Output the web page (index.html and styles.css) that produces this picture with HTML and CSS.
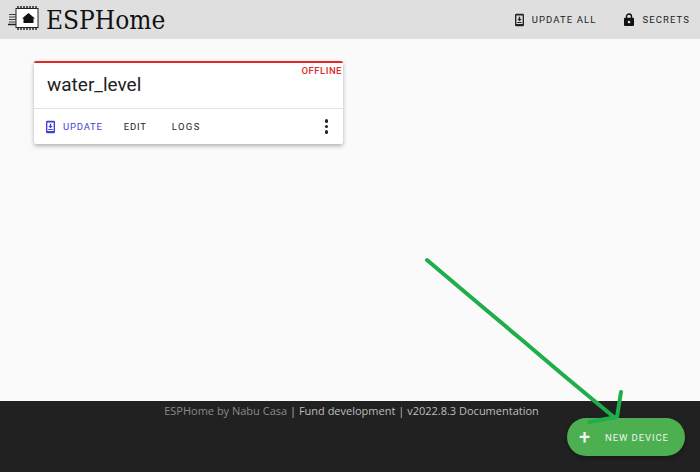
FILE: index.html
```html
<!DOCTYPE html>
<html lang="en">
<head>
  <meta charset="UTF-8" />
  <title>ESPHome</title>
  <link rel="stylesheet" href="styles.css">
</head>
<body>
  <header class="navbar">
    <div class="brand">
      <svg class="logo" width="31" height="24" viewBox="0 0 31 24">
        <path d="M1 8.500h7M1 11h7M1 13.500h7M1 16h7" stroke="#444" stroke-width="1" fill="none"/>
        <path d="M0 18.500h8" stroke="#222" stroke-width="1.500"/>
        <rect x="8" y="2.500" width="22" height="19" fill="#fff" stroke="#222" stroke-width="1"/>
        <path d="M9 1h20M9 23h20" stroke="#555" stroke-width="2" stroke-dasharray="2 1" fill="none"/>
        <path d="M20.500 7l6.500 5.500h-1.500v4.500h-10v-4.500h-1.500z" fill="#111"/>
      </svg>
      <span class="brand-name">ESPHome</span>
    </div>
    <nav class="nav-actions">
      <a class="nav-link">
        <svg width="9" height="14" viewBox="0 0 10 14">
          <path d="M1.500 0h7A1.500 1.500 0 0 1 10 1.500v11A1.500 1.500 0 0 1 8.500 14h-7A1.500 1.500 0 0 1 0 12.500v-11A1.500 1.500 0 0 1 1.500 0zM1.500 2v9.500h7V2z" fill="#222"/>
          <path d="M4.200 3.500h1.600v2.500h1.700L5 8.500 2.500 6h1.700zM2.500 9.200h5v1h-5z" fill="#222"/>
        </svg>
        UPDATE ALL
      </a>
      <a class="nav-link">
        <svg width="10" height="13" viewBox="0 0 10 13">
          <path d="M2.500 5V3.500a2.500 2.500 0 0 1 5 0V5" fill="none" stroke="#111" stroke-width="1.400"/>
          <path d="M1 4.800h8a1 1 0 0 1 1 1V12a1 1 0 0 1-1 1H1a1 1 0 0 1-1-1V5.800a1 1 0 0 1 1-1z" fill="#111"/>
          <circle cx="5" cy="9" r="1.300" fill="#ddd"/>
        </svg>
        SECRETS
      </a>
    </nav>
  </header>

  <main class="content">
    <div class="card">
      <span class="status">OFFLINE</span>
      <div class="card-title">water_level</div>
      <div class="card-actions">
        <a class="action action-update">
          <svg width="9" height="14" viewBox="0 0 10 14">
            <path d="M1.500 0h7A1.500 1.500 0 0 1 10 1.500v11A1.500 1.500 0 0 1 8.500 14h-7A1.500 1.500 0 0 1 0 12.500v-11A1.500 1.500 0 0 1 1.500 0zM1.500 2v9.500h7V2z" fill="#3f3fd0"/>
            <path d="M4.200 3.500h1.600v2.500h1.700L5 8.500 2.500 6h1.700zM2.500 9.200h5v1h-5z" fill="#3f3fd0"/>
          </svg>
          UPDATE
        </a>
        <a class="action">EDIT</a>
        <a class="action action-logs">LOGS</a>
        <span class="menu-dots"><i></i><i></i><i></i></span>
      </div>
    </div>
  </main>

  <footer class="footer">
    <span class="footer-dim">ESPHome by Nabu Casa</span> | <span class="footer-mid">Fund development</span> | <span class="footer-mid">v2022.8.3 Documentation</span>
  </footer>

  <button class="fab"><span class="fab-plus">+</span>NEW DEVICE</button>

  <!-- hand drawn arrow on top of the screenshot -->
  <svg class="arrow" width="700" height="472" viewBox="0 0 700 472">
    <path d="M427 260L453 282L485 309L522 340L562 374L615 418M621 392L617 417L589 422" fill="none" stroke="#1fae4b" stroke-width="4" stroke-linecap="round" stroke-linejoin="round"/>
  </svg>
</body>
</html>
```

FILE: styles.css
```css
* {
  box-sizing: border-box;
}

html, body {
  height: 100%;
}

body {
  margin: 0;
  height: 472px;
  overflow: hidden;
  position: relative;
  display: flex;
  flex-direction: column;
  background-color: #fafafa;
  font-family: Roboto, sans-serif;
}

.navbar {
  height: 39px;
  background-color: #dfdfdf;
  display: flex;
  align-items: center;
  justify-content: space-between;
  padding: 0 10px 0 8px;
}

.brand {
  display: flex;
  align-items: center;
  gap: 7px;
}

.logo {
  margin-top: -3px;
}

.brand-name {
  font-family: "DejaVu Serif Condensed", "DejaVu Serif", serif;
  font-size: 26px;
  color: #111;
  line-height: 36px;
}

.nav-actions {
  display: flex;
  gap: 28px;
}

.nav-link {
  display: flex;
  align-items: center;
  gap: 8px;
  font-size: 9.500px;
  letter-spacing: 1.100px;
  color: #222;
}

.content {
  flex: 1;
  padding: 22px 0 0 34px;
}

.card {
  position: relative;
  width: 309px;
  height: 83px;
  background-color: white;
  border-top: 2px solid #df2a2a;
  border-radius: 2px;
  box-shadow: 0 2px 4px rgba(0, 0, 0, 0.3);
}

.status {
  position: absolute;
  top: 2px;
  right: 1px;
  font-size: 9.500px;
  font-weight: 500;
  letter-spacing: 0.500px;
  color: #df2a2a;
}

.card-title {
  height: 46px;
  padding: 11px 0 0 13px;
  font-size: 19px;
  line-height: 22px;
  color: #222;
  border-bottom: 1px solid #e2e2e2;
}

.card-actions {
  height: 35px;
  display: flex;
  align-items: center;
  padding: 0 15px 0 12px;
  gap: 21px;
}

.action {
  display: flex;
  align-items: center;
  gap: 8px;
  font-size: 9.500px;
  letter-spacing: 0.800px;
  color: #222;
}

.action-update {
  color: #3f3fd0;
}

.action-logs {
  margin-left: 4px;
  letter-spacing: 1.400px;
}

.menu-dots {
  margin-left: auto;
  display: flex;
  flex-direction: column;
  gap: 2px;
}

.menu-dots i {
  width: 3.500px;
  height: 3.500px;
  border-radius: 50%;
  background-color: #222;
}

.footer {
  height: 71px;
  background-color: #212121;
  color: #bbb;
  font-family: "Open Sans", sans-serif;
  font-size: 11px;
  text-align: center;
  padding: 2px 0 0 3px;
}

.footer-dim {
  color: #8a8a8a;
}

.footer-mid {
  color: #bdbdbd;
}

.fab {
  position: absolute;
  left: 567px;
  top: 418px;
  width: 118px;
  height: 38px;
  border: none;
  border-radius: 19px;
  background-color: #4caf50;
  color: #f2f2f2;
  font-family: Roboto, sans-serif;
  font-size: 9.500px;
  letter-spacing: 0.900px;
  display: flex;
  align-items: center;
  padding: 0 0 0 12px;
  box-shadow: 0 2px 5px rgba(0, 0, 0, 0.3);
}

.fab-plus {
  font-size: 20px;
  font-weight: 500;
  width: 26px;
  line-height: 20px;
  text-align: left;
}

.arrow {
  position: absolute;
  left: 0;
  top: 0;
  pointer-events: none;
}
```
